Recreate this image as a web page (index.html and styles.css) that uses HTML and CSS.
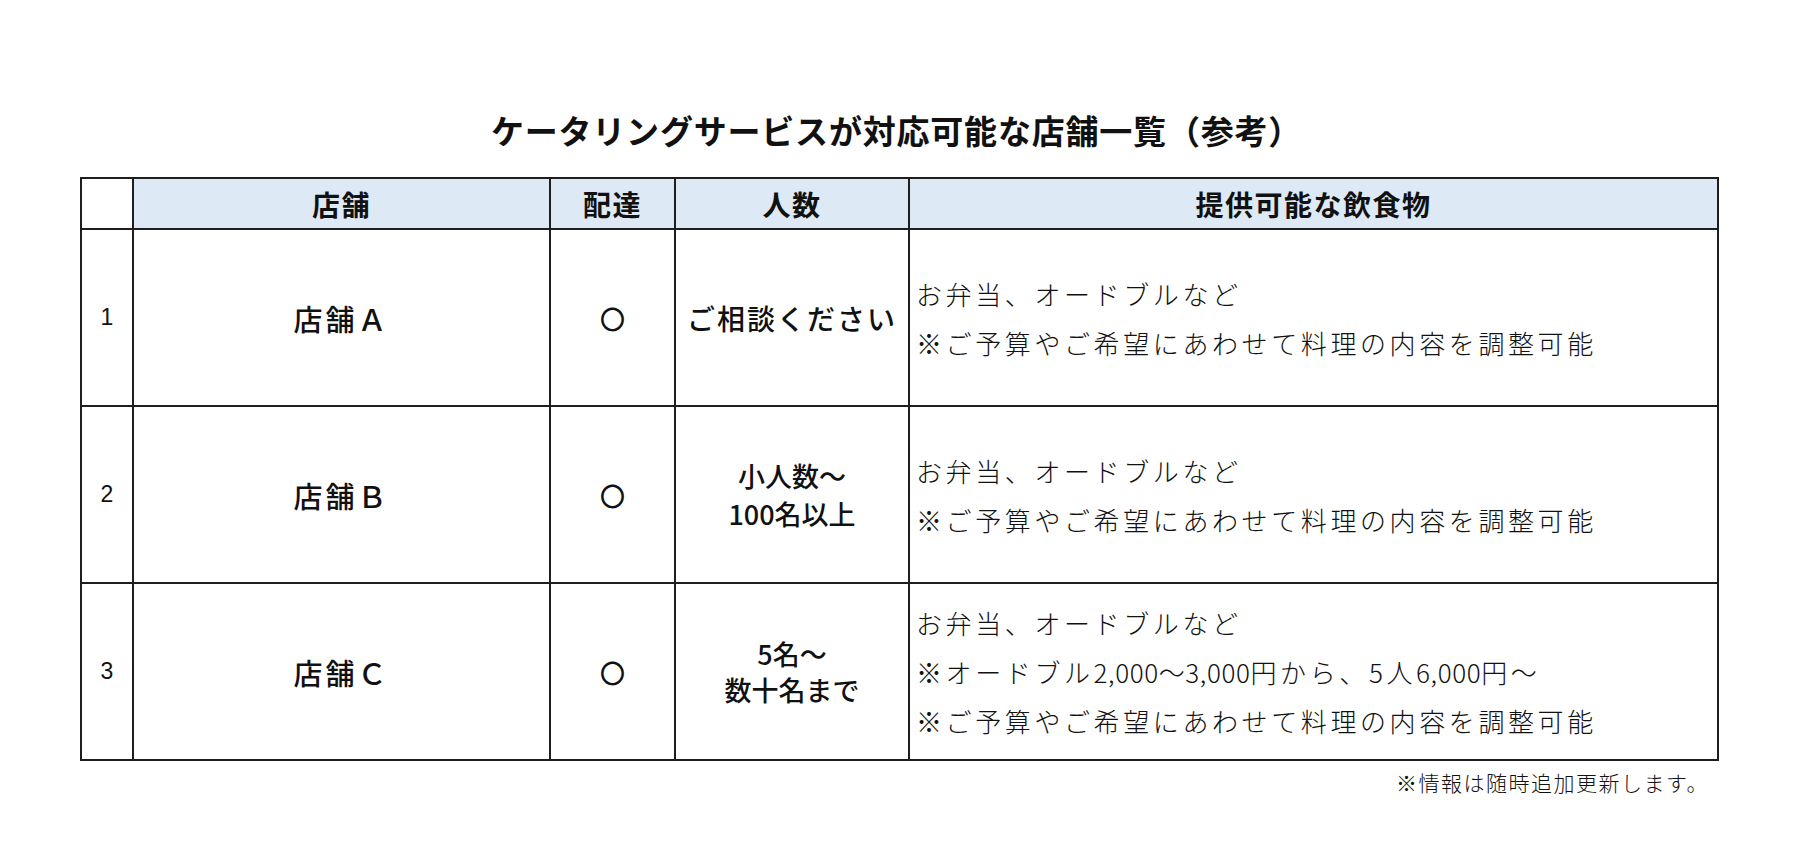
FILE: index.html
```html
<!DOCTYPE html>
<html lang="ja">
<head>
<meta charset="utf-8">
<title>ケータリングサービスが対応可能な店舗一覧（参考）</title>
<link rel="stylesheet" href="styles.css">
</head>
<body>
<div class="page">
  <h1 class="title">ケータリングサービスが対応可能な店舗一覧（参考）</h1>
  <table class="list">
    <colgroup>
      <col class="c-no">
      <col class="c-shop">
      <col class="c-deliv">
      <col class="c-people">
      <col class="c-food">
    </colgroup>
    <thead>
      <tr class="head">
        <th class="blank"></th>
        <th>店舗</th>
        <th>配達</th>
        <th>人数</th>
        <th>提供可能な飲食物</th>
      </tr>
    </thead>
    <tbody>
      <tr class="row">
        <td class="no">1</td>
        <td class="shop">店舗Ａ</td>
        <td class="deliv">〇</td>
        <td class="people">ご相談ください</td>
        <td class="food"><div class="line">お弁当、オードブルなど</div><div class="line">※ご予算やご希望にあわせて料理の内容を調整可能</div></td>
      </tr>
      <tr class="row">
        <td class="no">2</td>
        <td class="shop">店舗Ｂ</td>
        <td class="deliv">〇</td>
        <td class="people small wide">小人数～<br>100名以上</td>
        <td class="food"><div class="line">お弁当、オードブルなど</div><div class="line">※ご予算やご希望にあわせて料理の内容を調整可能</div></td>
      </tr>
      <tr class="row">
        <td class="no">3</td>
        <td class="shop">店舗Ｃ</td>
        <td class="deliv">〇</td>
        <td class="people small tight">5名～<br>数十名まで</td>
        <td class="food"><div class="line">お弁当、オードブルなど</div><div class="line">※オードブル<span class="num">2,000～3,000</span>円から、5人<span class="num">6,000</span>円～</div><div class="line">※ご予算やご希望にあわせて料理の内容を調整可能</div></td>
      </tr>
    </tbody>
  </table>
  <p class="note">※情報は随時追加更新します。</p>
</div>
</body>
</html>
```

FILE: styles.css
```css
html, body {
  margin: 0;
  padding: 0;
  background: #ffffff;
}

body {
  font-family: "Noto Sans CJK JP", "Noto Sans", sans-serif;
  color: #111111;
}

.page {
  width: 1637px;
  margin-left: 80px;
  padding-top: 110px;
}

.title {
  margin: 0 4px 0 0;
  font-size: 33px;
  line-height: 40px;
  font-weight: 700;
  letter-spacing: 0.8px;
  text-align: center;
  height: 40px;
}

.list {
  margin-top: 27px;
  width: 1637px;
  table-layout: fixed;
  border-collapse: collapse;
}

.c-no { width: 52px; }
.c-shop { width: 417px; }
.c-deliv { width: 125px; }
.c-people { width: 234px; }
.c-food { width: 809px; }

.list th,
.list td {
  border: 2px solid #1e1e1e;
  padding: 0;
  vertical-align: middle;
}

.head {
  height: 51px;
}

.head th {
  background: #dde9f5;
  font-size: 28px;
  font-weight: 700;
  line-height: 32px;
  text-align: center;
  letter-spacing: 1.5px;
}

.head th.blank {
  background: #ffffff;
}

.row {
  height: 177px;
}

.no {
  text-align: center;
  font-size: 23px;
  font-family: "Liberation Sans Narrow", "Liberation Sans", sans-serif;
  font-weight: 400;
}

.shop {
  text-align: center;
  font-size: 29px;
  font-weight: 500;
  letter-spacing: 3px;
}

.deliv {
  text-align: center;
  font-size: 25px;
  font-weight: 500;
}

.people {
  text-align: center;
  font-size: 28px;
  font-weight: 500;
  letter-spacing: 2px;
  white-space: nowrap;
}

.people.small {
  font-size: 27px;
  letter-spacing: 0;
}

.people.wide {
  line-height: 38px;
}

.people.tight {
  font-size: 27px;
  line-height: 36px;
}

.food {
  padding-left: 6px !important;
  font-size: 26px;
  font-weight: 300;
  letter-spacing: 3.6px;
  white-space: nowrap;
}

.food .num {
  letter-spacing: 0.6px;
}

.food .line {
  line-height: 49px;
}

.note {
  margin: 6px 8px 0 0;
  text-align: right;
  font-size: 21px;
  font-weight: 300;
  line-height: 30px;
  letter-spacing: 1.5px;
}
```
